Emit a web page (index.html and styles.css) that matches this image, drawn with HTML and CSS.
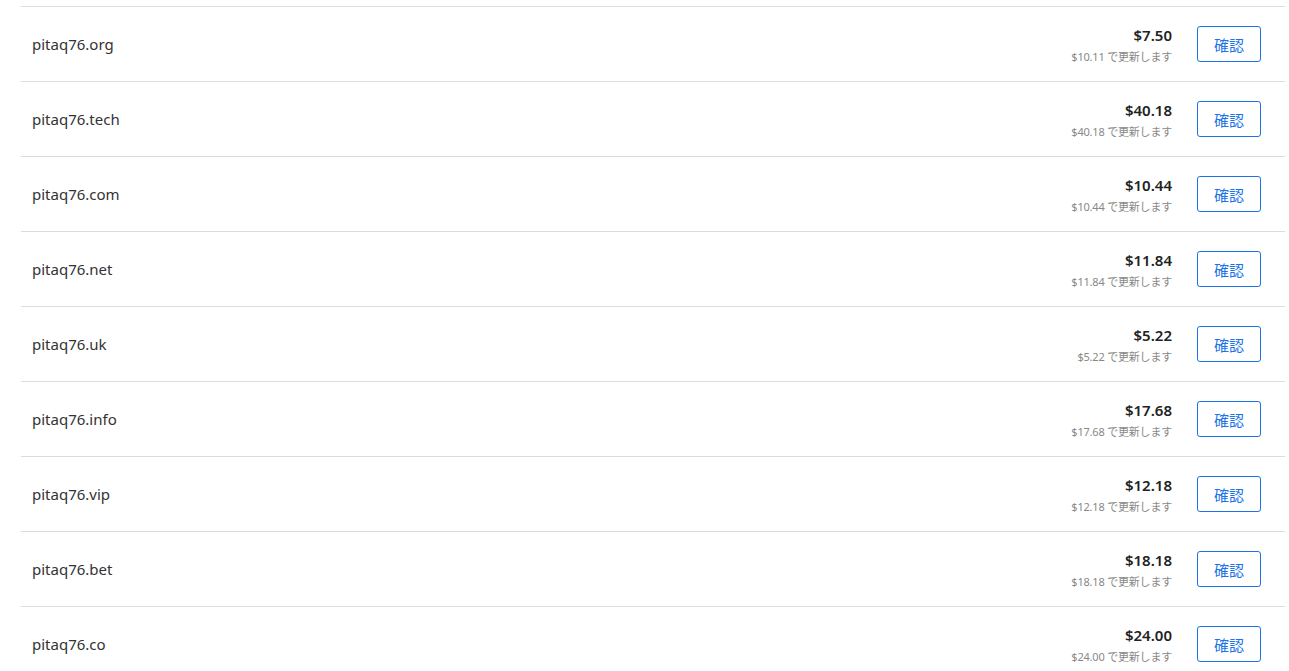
FILE: index.html
```html
<!DOCTYPE html>
<html lang="ja">
<head>
<meta charset="utf-8">
<link rel="stylesheet" href="styles.css">
</head>
<body>
<div class="list">
  <div class="row"><div class="name">pitaq76.org</div><div class="price"><div class="now">$7.50</div><div class="renew">$10.11 で更新します</div></div><button class="btn">確認</button></div>
  <div class="row"><div class="name">pitaq76.tech</div><div class="price"><div class="now">$40.18</div><div class="renew">$40.18 で更新します</div></div><button class="btn">確認</button></div>
  <div class="row"><div class="name">pitaq76.com</div><div class="price"><div class="now">$10.44</div><div class="renew">$10.44 で更新します</div></div><button class="btn">確認</button></div>
  <div class="row"><div class="name">pitaq76.net</div><div class="price"><div class="now">$11.84</div><div class="renew">$11.84 で更新します</div></div><button class="btn">確認</button></div>
  <div class="row"><div class="name">pitaq76.uk</div><div class="price"><div class="now">$5.22</div><div class="renew">$5.22 で更新します</div></div><button class="btn">確認</button></div>
  <div class="row"><div class="name">pitaq76.info</div><div class="price"><div class="now">$17.68</div><div class="renew">$17.68 で更新します</div></div><button class="btn">確認</button></div>
  <div class="row"><div class="name">pitaq76.vip</div><div class="price"><div class="now">$12.18</div><div class="renew">$12.18 で更新します</div></div><button class="btn">確認</button></div>
  <div class="row"><div class="name">pitaq76.bet</div><div class="price"><div class="now">$18.18</div><div class="renew">$18.18 で更新します</div></div><button class="btn">確認</button></div>
  <div class="row"><div class="name">pitaq76.co</div><div class="price"><div class="now">$24.00</div><div class="renew">$24.00 で更新します</div></div><button class="btn">確認</button></div>
</div>
</body>
</html>
```

FILE: styles.css
```css
html, body {
  margin: 0;
  padding: 0;
  background: #fff;
  overflow: hidden;
}
body {
  font-family: "Noto Sans", "Noto Sans CJK JP", sans-serif;
  color: #212529;
}
.list {
  margin: 6px 4px 0 21px;
}
.row {
  display: flex;
  align-items: center;
  height: 75px;
  box-sizing: border-box;
  border-top: 1px solid #dcdcdc;
  padding: 0 24px 0 11px;
}
.name {
  flex: 1;
  font-size: 15px;
  color: #333;
}
.price {
  text-align: right;
  margin: 4px 25px 0 0;
}
.now {
  font-size: 15px;
  font-weight: 600;
  color: #222;
  line-height: 22px;
}
.renew {
  font-size: 11px;
  color: #888;
  line-height: 22px;
  letter-spacing: -0.2px;
}
.btn {
  width: 64px;
  height: 36px;
  border: 1px solid #1a73e8;
  border-radius: 3px;
  background: #fff;
  color: #1a73e8;
  font-family: "Noto Sans CJK JP", sans-serif;
  font-size: 15px;
  padding: 0;
}
```
